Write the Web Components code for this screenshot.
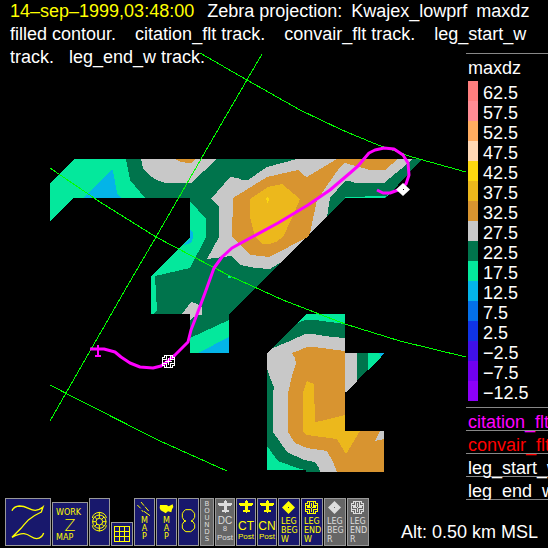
<!DOCTYPE html>
<html lang="en">
<head>
<meta charset="utf-8">
<title>Zebra projection</title>
<style>
html, body { margin: 0; background: #000; }
body { font: 18px/23px "Liberation Sans", Arial, sans-serif; color: #fff; overflow-x: hidden; }
</style>
</head>
<body>
<zebra-window></zebra-window>
<script>
class BaseElement extends HTMLElement {
  constructor() {
    super();
    this.attachShadow({ mode: "open" }).innerHTML = this.template();
  }
}

customElements.define("plot-title", class extends BaseElement {
  template() {
    return `<style>
      :host { display: block; padding: 0 4px 0 10px; }
      p { margin: 0; white-space: pre-wrap; }
      ::slotted(time) { color: #ff0; margin-right: 8px; }
      ::slotted(span) { margin-right: 4px; }
    </style><p><slot name="time"></slot> <slot></slot></p>`;
  }
});

customElements.define("radar-map", class extends BaseElement {
  template() {
    return `<style>
      :host { display: block; }
      svg { display: block; width: 100%; height: auto; }
      .g { fill: #00744c; } .l { fill: #04e89c; } .b { fill: #04b4e8; }
      .s { fill: #c8c8c8; } .o { fill: #d89430; } .y { fill: #ecb81c; } .m { fill: #fcd810; }
      .grid { fill: none; stroke: #0f0; }
      .track { fill: none; stroke: #f0f; stroke-width: 3; stroke-linejoin: round; }
    </style>
    <svg viewBox="0 52 466 428" role="img" aria-label="Filled contour map with flight tracks">
      <g shape-rendering="crispEdges">
      <path class="g" d="M50 183L74 159H422L386 198H345L229 314V353H190V314H151V276L190 238V198H73L50 222Z"/>
      <path class="l" d="M50 183L74 159H126L130 180L145 198H73L50 222Z"/>
      <path class="b" d="M84 198L112 169L113 171L117 193L121 198Z"/>
      <path class="l" d="M190 201L206 219V237L190 268L155 276L157 311L153 314H151V276L190 238Z"/>
      <path class="b" d="M190 230L193 232V238L191 243L184 245L190 238Z"/>
      <path class="l" d="M190 338L229 320V353H190ZM345 197H365V196H388L392 190L385 198H345ZM228 276h3v2h-3z"/>
      <path class="b" d="M198 353L229 337V353Z"/>
      <path class="s" d="M141 159L143 168L150 176L157 180L165 183H191L217 159Z"/>
      <path class="o" d="M175 159L181 162L188 163H192L195 159Z"/>
      <path class="s" d="M297 159L267 167L248 180H242L238 178L230 177L211 199L219 206V237L207 259L231 256L241 265L255 268L270 269L280 263L327 217L330 198L345 181H350L355 183H384L413 159Z"/>
      <path class="o" d="M337 159L307 177L302 174L298 170L267 177L233 198L232 237L251 255L269 257L308 237L310 233L317 200L340 167L345 163L352 165L370 170H385L398 159Z"/>
      <path class="y" d="M282 184L300 199L292 218L283 237L276 242L269 244H262L255 237L252 225L250 217V199L268 187Z"/>
      <path class="m" d="M266 198h1v-1h1v1h1v3h-1v2h-1v-3h-1z"/>
      <path class="s" d="M191 302L195 303L202 307V315H197L190 320V314H182Z"/>

      <path class="g" d="M306 314H345V353H384L345 392V431H384V472H306V470H267V353Z"/>
      <path class="l" d="M306 314H345V324L330 322L315 320H305L298 323Z"/>
      <path class="s" d="M267 353L273 348L290 341L305 334H313L332 337L345 338V353H357V381L346 392H345V431L384 472H320L319 468L315 462L304 460L287 452L273 432V393L274 387L270 378L267 368Z"/>
      <path class="l" d="M368 353H379L381 357L368 370Z"/>
      <path class="b" d="M379 353H384L381 357Z"/>
      <path class="o" d="M292 353L300 350L307 347H314L345 351V431H384V472H337L333 462L327 451L307 448L295 443L288 432V393L292 376L296 363L295 358Z"/>
      <path class="s" d="M380 431H384V439L375 441Z"/>
      <path class="y" d="M307 381L314 384L315 422L325 420L345 415V431H360L346 454L337 439L307 435L303 432V393Z"/>
      <path class="l" d="M267 446L278 461L300 469L306 470H267Z"/>
      </g>
      <g class="grid" shape-rendering="crispEdges">
        <path d="M200 53L247 80L300 110L342 130L378 145L412 157L466 172"/>
        <path d="M262 54L212 140L156 237L125 290L50 421"/>
        <path d="M50 168L100 202L156 237L230 276L283 300L345 324L400 341L466 357"/>
        <path d="M50 385L77 399L160 441L227 471"/>
      </g>
      <path class="track" d="M90 349H104L115 352L121 357L130 363L140 367L153 368L161 366L168 361L175 355L188 342L191 330L196 317L205 293L214 268L222 257L232 248L241 243L278 223L308 205L330 190L350 173L358 166L369 153L375 150L384 148L394 149L403 155L408 163L409 175L406 184L398 190L390 193H383L377 190"/>
      <path d="M98 345V357M95 356H101" fill="none" stroke="#f0f" stroke-width="2"/>
      <path d="M403 183L410 189.500L403 196L396 189.500Z" fill="#fff"/><path d="M403 189h1v1h-1z"/>
      <g fill="none" stroke="#fff" shape-rendering="crispEdges">
        <path d="M164.500 355.500H172.500V357.500H174.500V365.500H172.500V367.500H164.500V365.500H162.500V357.500H164.500Z"/>
        <path d="M166.500 356V359.500H163M170.500 356V359.500H174M166.500 367V363.500H163M170.500 367V363.500H174M168.500 358V365M165 361.500H172"/>
      </g>
    </svg>`;
  }
});

customElements.define("color-legend", class extends BaseElement {
  template() {
    const bands = [["62.5", "#ff7f7f"], ["57.5", "#ff8c94"], ["52.5", "#ffac60"], ["47.5", "#ffd8b4"],
      ["42.5", "#fcd810"], ["37.5", "#ecb81c"], ["32.5", "#d89430"], ["27.5", "#c8c8c8"],
      ["22.5", "#00744c"], ["17.5", "#04e89c"], ["12.5", "#04b4e8"], ["7.5", "#0470e8"],
      ["2.5", "#1034e4"], ["−2.5", "#4010e8"], ["−7.5", "#7000f0"], ["−12.5", "#8c00f8"]];
    return `<style>
      :host { display: block; overflow: hidden; white-space: nowrap; padding-top: 1px; }
      h2 { font: inherit; margin: 0; padding: 3px 0 1px 2px; border-top: 1px solid #888; }
      ul { list-style: none; margin: 0; padding: 0 0 6px 2px; }
      li { display: flex; gap: 5px; height: 20px; line-height: 24px; }
      li::before { content: ""; width: 10px; background: var(--band); }
    </style>
    <h2>maxdz</h2>
    <ul>${bands.map(([v, c]) => `<li style="--band:${c}">${v}</li>`).join("")}</ul>
    <slot></slot>`;
  }
});

customElements.define("track-label", class extends BaseElement {
  template() {
    return `<style>
      :host { display: block; height: 22px; line-height: 28px; padding-left: 2px; border-top: 1px solid #888; }
      :host([last]) { border-bottom: 1px solid #888; }
    </style><slot></slot>`;
  }
});

customElements.define("tool-button", class extends BaseElement {
  template() {
    return `<style>
      :host { display: block; width: var(--w, 21px); height: var(--h, 48px); --ink: #ff0; --face: #18186c; }
      :host([off]) { --ink: #ddd; --face: #666; }
      button { display: flex; flex-direction: column; align-items: center; width: 100%; height: 100%;
        box-sizing: border-box; margin: 0; padding: 0; border: 1px solid #999; border-radius: 0;
        background: var(--face); color: var(--ink); font: 8px/8px "DejaVu Sans", sans-serif;
        white-space: pre; text-align: left; overflow: hidden; }
    </style><button type="button"><slot></slot></button>`;
  }
});

const plane = `<svg width="18" height="15" viewBox="109 39 54 45" aria-hidden="true"><path fill="currentColor" shape-rendering="crispEdges" d="M133 45h3v-3h3v3h3v6h15v6h-3v3h-12v12h6v6h-9v3h-3v-3h-9v-6h6v-12h-15v-3h-3v-6h19z"/></svg>`;
const diamond = `<svg width="20" height="17" viewBox="0 0 20 17" aria-hidden="true"><path fill="currentColor" d="M9.500 2L16 8.500L9.500 15L3 8.500Z"/><path fill="var(--face)" d="M9 8h1v1h-1z"/></svg>`;
const wheel = `<svg width="20" height="17" viewBox="159 353 20 17" aria-hidden="true"><g fill="none" stroke="currentColor" shape-rendering="crispEdges"><path d="M164.500 355.500H172.500V357.500H174.500V365.500H172.500V367.500H164.500V365.500H162.500V357.500H164.500Z"/><path d="M166.500 356V359.500H163M170.500 356V359.500H174M166.500 367V363.500H163M170.500 367V363.500H174M168.500 357V361M168.500 362V366M164 361.500H168M169 361.500H173M164 360.500H167M170 360.500H173"/></g></svg>`;

customElements.define("tool-bar", class extends BaseElement {
  template() {
    return `<style>
      :host { display: flex; align-items: flex-end; gap: 1px; }
      svg { display: block; flex: none; }
      .line { fill: none; stroke: currentColor; stroke-width: 3; }
      .row { width: 28px; line-height: 10px; }
      .work { padding-top: 5px; }
      .big { font: 200 16px/15px "DejaVu Sans", sans-serif; }
      .stack { text-align: center; }
      .bounds { font: 7px/7px "DejaVu Sans", sans-serif; padding-top: 2px; text-align: center; }
      .leg { line-height: 9px; width: 16px; padding-top: 1px; }
      .dc { font: 10px/10px "Liberation Sans", sans-serif; padding-top: 2px; }
      .eight { font: 7px/7px "DejaVu Sans", sans-serif; }
      .ct { font: 12px/12px "Liberation Sans", sans-serif; padding-top: 6px; }
      .post { font: 8px/10px "Liberation Sans", sans-serif; }
    </style>
    <tool-button style="--w:46px"><svg width="44" height="46" viewBox="18 27 132 138" role="img" aria-label="Zebra"><path class="line" style="stroke-width:4" d="M36 62Q42 49 58 48C82 48 88 61 106 61Q120 59 129 51L124 66Q104 75 86 89Q72 104 63 115L36 142Q58 130 72 131C90 133 96 146 110 146Q126 144 131 129"/></svg></tool-button>
    <tool-button style="--w:36px;--h:44px"><span class="row work">WORK</span><span class="big">Z</span><span class="row">MAP</span></tool-button>
    <tool-button><svg width="19" height="46" viewBox="270 27 57 138" role="img" aria-label="Radar rings"><g class="line"><circle cx="298" cy="95" r="10"/><circle cx="298" cy="95" r="20"/><path d="M298 66V85M298 105V124M277 95H288M308 95H319M284 81L291 88M305 102L312 109M312 81L305 88M291 102L284 109M277 84Q279 69 298 67Q317 69 319 84M277 106Q279 121 298 123Q317 121 319 106"/></g></svg></tool-button>
    <tool-button style="--w:22px;--h:24px"><svg width="20" height="22" viewBox="336 99 60 66" role="img" aria-label="Grid"><path class="line" shape-rendering="crispEdges" d="M343.500 109.500H388.500V154.500H343.500ZM358.500 109V155M373.500 109V155M343 124.500H389M343 139.500H389"/></svg></tool-button>
    <tool-button><svg width="19" height="18" viewBox="405 27 57 54" aria-hidden="true"><path class="line" d="M423 36L432 47M435 50L446 63M412 45L422 55M425 60L430 66M432 64L450 77"/></svg><span class="stack">M
A
P</span></tool-button>
    <tool-button><svg width="19" height="18" viewBox="471 27 57 54" aria-hidden="true"><path fill="currentColor" d="M480 45H500L506 49L518 43L520 51L516 58L514 67L504 64L497 70L490 65L482 61L479 54Z"/></svg><span class="stack">M
A
P</span></tool-button>
    <tool-button><svg width="19" height="46" viewBox="-3 27 57 138" role="img" aria-label="Flight pattern"><path class="line" d="M17 59H33L39 64L44 71V82L38 91L33 93L39 95L44 103V114L38 121L32 125H18L12 121L7 114V103L12 95L18 93L12 91L7 82V71L11 64Z"/></svg></tool-button>
    <tool-button off style="--w:14px"><span class="bounds">B
O
U
N
D
S</span></tool-button>
    <tool-button off style="--w:20px">${plane}<span class="dc">DC</span><span class="eight">8</span><span class="post">Post</span></tool-button>
    <tool-button style="--w:20px">${plane}<span class="ct">CT</span><span class="post">Post</span></tool-button>
    <tool-button style="--w:20px">${plane}<span class="ct">CN</span><span class="post">Post</span></tool-button>
    <tool-button style="--w:22px">${diamond}<span class="leg">LEG
BEG
W</span></tool-button>
    <tool-button style="--w:22px">${wheel}<span class="leg">LEG
END
W</span></tool-button>
    <tool-button off style="--w:22px">${diamond}<span class="leg">LEG
BEG
R</span></tool-button>
    <tool-button off style="--w:22px">${wheel}<span class="leg">LEG
END
R</span></tool-button>`;
  }
});

customElements.define("altitude-readout", class extends BaseElement {
  template() {
    return `<style>:host { display: block; white-space: nowrap; }</style><slot></slot>`;
  }
});

customElements.define("zebra-window", class extends BaseElement {
  template() {
    return `<style>
      :host { display: grid; grid-template-columns: minmax(0, 1fr) 82px; grid-template-rows: 52px 1fr auto; min-height: 100vh; }
      plot-title { grid-area: 1 / 1 / 3 / 3; z-index: 1; align-self: start; }
      radar-map { grid-area: 2 / 1; }
      color-legend { grid-area: 2 / 2 / 4 / 3; align-self: start; }
      footer { grid-area: 3 / 1 / 4 / 3; display: flex; justify-content: space-between; align-items: flex-end; padding: 0 10px 2px 5px; }
      altitude-readout { padding-bottom: 2px; }
      .citation { color: #f0f; } .convair { color: #f00; }
    </style>
    <plot-title><time slot="time" datetime="1999-09-14T03:48:00">14–sep–1999,03:48:00</time><span>Zebra projection:</span> <span>Kwajex_lowprf</span> maxdz <span>filled contour.</span>   <span>citation_flt track.</span>   <span>convair_flt track.</span>   leg_start_w track.   leg_end_w track.</plot-title>
    <radar-map></radar-map>
    <color-legend>
      <track-label class="citation">citation_flt</track-label>
      <track-label class="convair">convair_flt</track-label>
      <track-label>leg_start_w</track-label>
      <track-label last>leg_end_w</track-label>
    </color-legend>
    <footer><tool-bar></tool-bar><altitude-readout>Alt: 0.50 km MSL</altitude-readout></footer>`;
  }
});
</script>
</body>
</html>
